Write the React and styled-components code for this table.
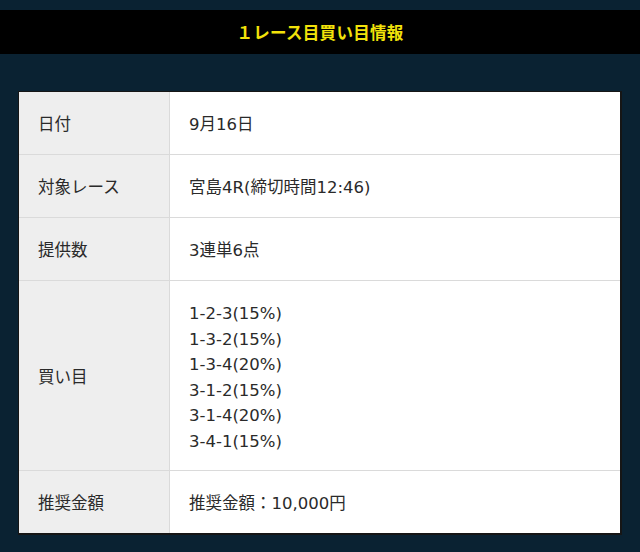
import styled, { createGlobalStyle } from 'styled-components';

const GlobalStyle = createGlobalStyle`
  html, body {
    margin: 0;
    padding: 0;
    background: #0a2232;
  }
  body {
    font-family: "Noto Sans CJK JP", "Noto Sans", sans-serif;
  }
`

const Page = styled.div`
  width: 640px;
  min-height: 552px;
  background: #0a2232;
  padding-top: 10px;
  box-sizing: border-box;
`

const Banner = styled.h2`
  margin: 0;
  height: 44px;
  background: #000;
  color: #f2e20a;
  font-size: 16.5px;
  font-weight: 700;
  display: flex;
  align-items: center;
  justify-content: center;
  letter-spacing: 0.3px;
`

const TableWrap = styled.div`
  margin: 37px 18px 0;
  border: 2px solid #161616;
  border-top-width: 1px;
  border-left-width: 1px;
  background: #fff;
`

const Table = styled.table`
  width: 100%;
  border-collapse: collapse;
  font-family: "DejaVu Sans", "Noto Sans CJK JP", sans-serif;
  font-size: 16.5px;
  color: #2a2a2a;
`

const Row = styled.tr`
  & + & > * {
    border-top: 1px solid #dadada;
  }
`

const Label = styled.th`
  width: 112px;
  background: #eeeeee;
  border-right: 1px solid #dadada;
  text-align: left;
  font-weight: 400;
  padding: 20px 19px 16px;
  line-height: 26px;
  vertical-align: middle;
`

const Value = styled.td`
  padding: 20px 19px 16px;
  line-height: ${(p) => (p.$list ? '25.5px' : '26px')};
  vertical-align: middle;
`

const Line = styled.div``

const picks = [
  '1-2-3(15%)',
  '1-3-2(15%)',
  '1-3-4(20%)',
  '3-1-2(15%)',
  '3-1-4(20%)',
  '3-4-1(15%)',
]

export default function App() {
  return (
    <Page>
      <GlobalStyle />
      <Banner>１レース目買い目情報</Banner>
      <TableWrap>
        <Table>
          <tbody>
            <Row>
              <Label>日付</Label>
              <Value>9月16日</Value>
            </Row>
            <Row>
              <Label>対象レース</Label>
              <Value>宮島4R(締切時間12:46)</Value>
            </Row>
            <Row>
              <Label>提供数</Label>
              <Value>3連単6点</Value>
            </Row>
            <Row>
              <Label>買い目</Label>
              <Value $list>
                {picks.map((p) => (
                  <Line key={p}>{p}</Line>
                ))}
              </Value>
            </Row>
            <Row>
              <Label>推奨金額</Label>
              <Value>推奨金額：10,000円</Value>
            </Row>
          </tbody>
        </Table>
      </TableWrap>
    </Page>
  )
}
